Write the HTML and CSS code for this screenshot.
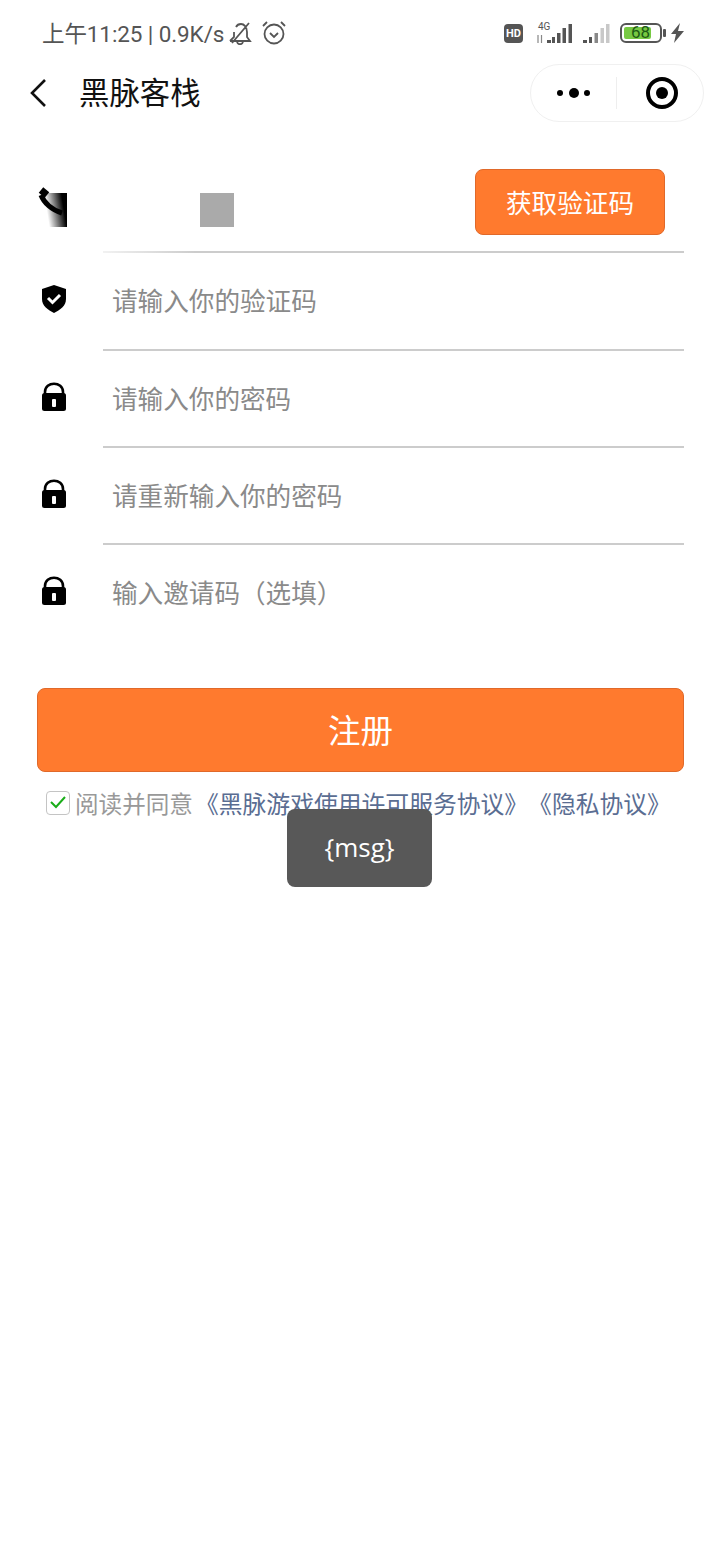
FILE: index.html
```html
<!DOCTYPE html>
<html lang="zh-CN">
<head>
    <meta charset="UTF-8">
    <meta name="viewport" content="width=device-width, initial-scale=1.0">
    <title>黑脉客栈</title>
    <link rel="stylesheet" href="styles.css">
</head>
<body>
    <div class="page">
        <div class="status-bar">
            <div class="status-left">
                <span class="status-text">上午11:25 | 0.9K/s</span>
                <svg class="status-icon" width="24" height="24" viewBox="0 0 24 24" fill="none" stroke="#555" stroke-width="1.8">
                    <path d="M1 20h20l-3-4v-5c0-5-3-8-6-8-2 0-4 1-5 3M5 11v5l-4 4M8 21c1 3 5 3 6 0M3 22 20 2"/>
                </svg>
                <svg class="status-icon" width="24" height="24" viewBox="0 0 24 24" fill="none" stroke="#555" stroke-width="1.8">
                    <circle cx="12" cy="13" r="9.500"/>
                    <path d="M8 12l4 4 4-4M1 5l4-4M23 5l-4-4"/>
                </svg>
            </div>
            <div class="status-right">
                <span class="hd">HD</span>
                <svg class="signal-one" width="37" height="26" viewBox="0 0 37 26">
                    <text x="2" y="10" font-size="10" fill="#555" font-family="Roboto, sans-serif">4G</text>
                    <path d="M2 15v8M5.500 15v8" stroke="#888" stroke-width="1.200"/>
                    <path d="M11 20h4v3h-4zM16 17h3v6h-3zM21 13h3.500v10H21zM26.500 8H30v15h-3.500zM32.500 4H36v19h-3.500z" fill="#555"/>
                </svg>
                <svg class="signal-two" width="27" height="26" viewBox="0 0 27 26">
                    <path d="M0 20h4v3H0zM6 17h3v6H6z" fill="#555"/>
                    <path d="M11.500 13H15v10h-3.500z" fill="#888"/>
                    <path d="M17.500 8H21v15h-3.500zM23 4h3.500v19H23z" fill="#c8c8c8"/>
                </svg>
                <div class="battery">
                    <div class="battery-body"><div class="battery-fill"></div><span class="battery-num">68</span></div>
                    <div class="battery-tip"></div>
                </div>
                <svg class="bolt" width="13" height="20" viewBox="0 0 13 20"><path d="M9 0 0 11h5l-2 9 10-12H7z" fill="#555"/></svg>
            </div>
        </div>

        <div class="nav-bar">
            <svg class="back" width="18" height="30" viewBox="0 0 18 30" fill="none" stroke="#111" stroke-width="2.600">
                <path d="M16 2 3 15l13 13"/>
            </svg>
            <span class="nav-title">黑脉客栈</span>
            <div class="capsule">
                <div class="capsule-dots"><i class="dot"></i><i class="dot dot-big"></i><i class="dot"></i></div>
                <div class="capsule-line"></div>
                <div class="capsule-target"><i class="target-core"></i></div>
            </div>
        </div>

        <div class="form">
            <div class="row row-phone">
                <div class="icon-cell">
                    <svg class="phone-icon" width="30" height="42" viewBox="0 0 30 42">
                        <defs>
                            <linearGradient id="fade" x1="0" y1="0.85" x2="1" y2="0.6">
                                <stop offset="0.15" stop-color="#fff"/>
                                <stop offset="0.9" stop-color="#000"/>
                            </linearGradient>
                        </defs>
                        <rect x="7" y="7" width="22" height="34" fill="url(#fade)"/>
                        <path d="M3 4l6 5" fill="none" stroke="#000" stroke-width="7"/>
                        <path d="M3 9C6 17 14 24 24 27" fill="none" stroke="#000" stroke-width="5"/>
                    </svg>
                </div>
                <div class="field field-phone">
                    <div class="masked"></div>
                    <button class="code-btn">获取验证码</button>
                </div>
            </div>
            <div class="row">
                <div class="icon-cell">
                    <svg class="shield-icon" width="26" height="28" viewBox="0 0 26 28">
                        <path d="M13 0 25 4v10c0 7-6 11-12 14C7 25 1 21 1 14V4z" fill="#000"/>
                        <path d="M7 13l4.500 4.500L19 10" fill="none" stroke="#fff" stroke-width="3"/>
                    </svg>
                </div>
                <div class="field"><span class="placeholder">请输入你的验证码</span></div>
            </div>
            <div class="row">
                <div class="icon-cell">
                    <svg class="lock-icon" width="24" height="29" viewBox="0 0 24 29">
                        <path d="M3 12V10C3-1 21-1 21 10v2" fill="none" stroke="#000" stroke-width="2.600"/>
                        <rect x="0" y="11" width="24" height="18" rx="2.500" fill="#000"/>
                        <rect x="10" y="17" width="4" height="8" rx="1" fill="#fff"/>
                    </svg>
                </div>
                <div class="field"><span class="placeholder">请输入你的密码</span></div>
            </div>
            <div class="row">
                <div class="icon-cell">
                    <svg class="lock-icon" width="24" height="29" viewBox="0 0 24 29">
                        <path d="M3 12V10C3-1 21-1 21 10v2" fill="none" stroke="#000" stroke-width="2.600"/>
                        <rect x="0" y="11" width="24" height="18" rx="2.500" fill="#000"/>
                        <rect x="10" y="17" width="4" height="8" rx="1" fill="#fff"/>
                    </svg>
                </div>
                <div class="field"><span class="placeholder">请重新输入你的密码</span></div>
            </div>
            <div class="row">
                <div class="icon-cell">
                    <svg class="lock-icon" width="24" height="29" viewBox="0 0 24 29">
                        <path d="M3 12V10C3-1 21-1 21 10v2" fill="none" stroke="#000" stroke-width="2.600"/>
                        <rect x="0" y="11" width="24" height="18" rx="2.500" fill="#000"/>
                        <rect x="10" y="17" width="4" height="8" rx="1" fill="#fff"/>
                    </svg>
                </div>
                <div class="field field-last"><span class="placeholder">输入邀请码（选填）</span></div>
            </div>

            <button class="submit-btn">注册</button>

            <div class="agree">
                <div class="checkbox">
                    <svg width="16" height="13" viewBox="0 0 16 13" fill="none" stroke="#1aad19" stroke-width="2"><path d="M1 6l5 5 9-10"/></svg>
                </div>
                <span class="agree-text">阅读并同意</span>
                <span class="agree-link">《黑脉游戏使用许可服务协议》《隐私协议》</span>
            </div>
        </div>

        <div class="toast">{msg}</div>
    </div>
</body>
</html>
```

FILE: styles.css
```css
body {
    margin: 0;
    background: #fff;
    font-family: "Roboto", "Noto Sans CJK SC", sans-serif;
}

.page {
    position: relative;
    width: 720px;
    height: 1560px;
    overflow: hidden;
}

/* status bar */
.status-bar {
    display: flex;
    justify-content: space-between;
    align-items: center;
    height: 66px;
    padding: 0 36px 0 42px;
    box-sizing: border-box;
}

.status-left {
    display: flex;
    align-items: center;
    gap: 9px;
}

.status-text {
    margin-right: -4px;
    margin-bottom: 2px;
    font-size: 22.5px;
    color: #555;
    letter-spacing: -0.1px;
}

.status-icon {
    margin-bottom: 1px;
}

.status-right {
    display: flex;
    align-items: center;
}

.hd {
    width: 19px;
    height: 19px;
    background: #555;
    border-radius: 4px;
    color: #fff;
    font-size: 11px;
    font-weight: 700;
    line-height: 19px;
    text-align: center;
}

.signal-one {
    margin-left: 13px;
}

.signal-two {
    margin-left: 10px;
}

.battery {
    display: flex;
    align-items: center;
    gap: 1px;
    margin-left: 10px;
}

.battery-body {
    position: relative;
    width: 42px;
    height: 20px;
    border: 2.5px solid #555;
    border-radius: 6px;
    box-sizing: border-box;
    padding: 2px;
}

.battery-fill {
    width: 80%;
    height: 100%;
    background: #77c943;
    border-radius: 2px;
}

.battery-num {
    position: absolute;
    top: -3px;
    left: 9px;
    font-size: 17px;
    color: #1c5a14;
}

.battery-tip {
    width: 3px;
    height: 8px;
    background: #555;
    border-radius: 1px;
}

.bolt {
    margin-left: 5px;
}

/* nav bar */
.nav-bar {
    display: flex;
    align-items: center;
    height: 56px;
    padding: 0 16px 0 29px;
}

.back {
    margin-bottom: 2px;
}

.nav-title {
    margin-left: 32px;
    margin-bottom: 6px;
    font-size: 30.4px;
    color: #111;
}

.capsule {
    display: flex;
    align-items: center;
    width: 174px;
    height: 58px;
    margin-left: auto;
    margin-bottom: 2px;
    border: 1px solid #f0f0f0;
    border-radius: 29px;
    box-sizing: border-box;
}

.capsule-dots {
    display: flex;
    align-items: center;
    justify-content: center;
    gap: 5.5px;
    width: 85px;
}

.dot {
    width: 6px;
    height: 6px;
    background: #000;
    border-radius: 50%;
}

.dot-big {
    width: 10px;
    height: 10px;
}

.capsule-line {
    width: 1px;
    height: 32px;
    background: #eee;
}

.capsule-target {
    display: flex;
    align-items: center;
    justify-content: center;
    width: 32px;
    height: 32px;
    margin-left: 29px;
    border: 4px solid #000;
    border-radius: 50%;
    box-sizing: border-box;
}

.target-core {
    width: 12px;
    height: 12px;
    background: #000;
    border-radius: 50%;
}

/* form */
.form {
    padding: 34px 36px 0 37px;
}

.row {
    display: flex;
    height: 97.33px;
}

.icon-cell {
    flex: none;
    width: 66px;
}

.phone-icon {
    margin: 30px 0 0 1px;
}

.shield-icon {
    margin: 32px 0 0 4px;
}

.lock-icon {
    margin: 31px 0 0 5px;
}

.field {
    flex: 1;
    display: flex;
    align-items: center;
    padding-left: 9px;
    border-bottom: 2px solid #ccc;
}

.field-last {
    border-bottom-color: transparent;
}

.placeholder {
    margin-bottom: 2px;
    font-size: 25.6px;
    color: #8a8a8a;
}

.field-phone {
    position: relative;
    border-image: linear-gradient(to right, #f2f2f2, #ccc 16%) 1;
}

.masked {
    width: 34px;
    height: 34px;
    margin: 12px 0 0 88px;
    background: #aaa;
}

.code-btn {
    position: absolute;
    top: 13px;
    right: 19px;
    width: 190px;
    height: 66px;
    border: 1px solid #e0692a;
    border-radius: 8px;
    background: #ff7a2e;
    color: #fff;
    font-family: inherit;
    font-size: 25.6px;
    padding: 0 0 2px;
}

.submit-btn {
    display: block;
    width: 100%;
    height: 84px;
    margin-top: 45.4px;
    border: 1px solid #e0692a;
    border-radius: 8px;
    background: #ff7a2e;
    color: #fff;
    font-family: inherit;
    font-size: 32.5px;
    padding: 0 0 4px;
}

.agree {
    display: flex;
    align-items: center;
    margin-top: 13px;
    padding-left: 9px;
    font-size: 23.6px;
    white-space: nowrap;
    text-spacing-trim: space-all;
}

.checkbox {
    display: flex;
    align-items: center;
    justify-content: center;
    width: 24px;
    height: 24px;
    margin-right: 5px;
    border: 1px solid #c4c4c4;
    border-radius: 4px;
    box-sizing: border-box;
}

.agree-text {
    color: #999;
}

.agree-link {
    margin-left: 2px;
    font-size: 23.8px;
    color: #5a6d92;
}

/* toast */
.toast {
    position: absolute;
    top: 809px;
    left: 287px;
    width: 145px;
    height: 78px;
    background: #585858;
    border-radius: 8px;
    color: #fff;
    font-family: "Open Sans", sans-serif;
    font-size: 26px;
    line-height: 76px;
    text-align: center;
}
```
